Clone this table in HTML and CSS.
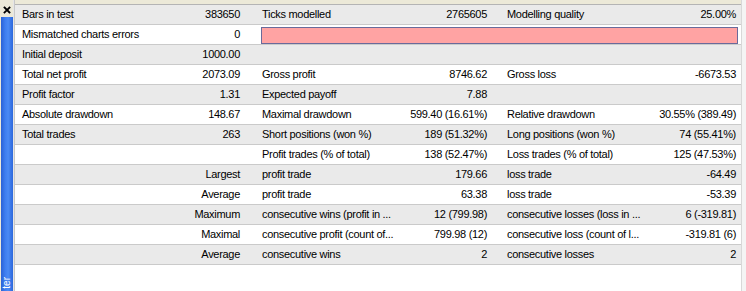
FILE: index.html
```html
<!DOCTYPE html>
<html>
<head>
<meta charset="utf-8">
<link rel="stylesheet" href="styles.css">
</head>
<body>
<div class="window">
  <aside class="side">
    <div class="close">
      <svg width="12" height="17" viewBox="0 0 12 17" aria-label="close">
        <path d="M3.5 7.5 L8.5 12.5 M8.5 7.5 L3.5 12.5" stroke="#000" stroke-width="1.8" stroke-linecap="square" fill="none"/>
      </svg>
    </div>
    <div class="tab"><span class="tab-text">ter</span></div>
  </aside>
  <div class="sep"></div>
  <main class="main">
    <div class="topband"></div>
    <div class="report">
      <div class="row alt">
        <div class="l1">Bars in test</div><div class="v1">383650</div>
        <div class="l2">Ticks modelled</div><div class="v2">2765605</div>
        <div class="l3">Modelling quality</div><div class="v3">25.00%</div>
      </div>
      <div class="row">
        <div class="l1">Mismatched charts errors</div><div class="v1">0</div>
        <div class="quality"><div class="qbar"></div></div>
      </div>
      <div class="row alt">
        <div class="l1">Initial deposit</div><div class="v1">1000.00</div>
        <div class="l2"></div><div class="v2"></div><div class="l3"></div><div class="v3"></div>
      </div>
      <div class="row">
        <div class="l1">Total net profit</div><div class="v1">2073.09</div>
        <div class="l2">Gross profit</div><div class="v2">8746.62</div>
        <div class="l3">Gross loss</div><div class="v3">-6673.53</div>
      </div>
      <div class="row alt">
        <div class="l1">Profit factor</div><div class="v1">1.31</div>
        <div class="l2">Expected payoff</div><div class="v2">7.88</div>
        <div class="l3"></div><div class="v3"></div>
      </div>
      <div class="row">
        <div class="l1">Absolute drawdown</div><div class="v1">148.67</div>
        <div class="l2">Maximal drawdown</div><div class="v2">599.40 (16.61%)</div>
        <div class="l3">Relative drawdown</div><div class="v3">30.55% (389.49)</div>
      </div>
      <div class="row alt">
        <div class="l1">Total trades</div><div class="v1">263</div>
        <div class="l2">Short positions (won %)</div><div class="v2">189 (51.32%)</div>
        <div class="l3">Long positions (won %)</div><div class="v3">74 (55.41%)</div>
      </div>
      <div class="row">
        <div class="l1"></div><div class="v1"></div>
        <div class="l2">Profit trades (% of total)</div><div class="v2">138 (52.47%)</div>
        <div class="l3">Loss trades (% of total)</div><div class="v3">125 (47.53%)</div>
      </div>
      <div class="row alt">
        <div class="l1"></div><div class="v1">Largest</div>
        <div class="l2">profit trade</div><div class="v2">179.66</div>
        <div class="l3">loss trade</div><div class="v3">-64.49</div>
      </div>
      <div class="row">
        <div class="l1"></div><div class="v1">Average</div>
        <div class="l2">profit trade</div><div class="v2">63.38</div>
        <div class="l3">loss trade</div><div class="v3">-53.39</div>
      </div>
      <div class="row alt">
        <div class="l1"></div><div class="v1">Maximum</div>
        <div class="l2">consecutive wins (profit in ...</div><div class="v2">12 (799.98)</div>
        <div class="l3">consecutive losses (loss in ...</div><div class="v3">6 (-319.81)</div>
      </div>
      <div class="row">
        <div class="l1"></div><div class="v1">Maximal</div>
        <div class="l2">consecutive profit (count of...</div><div class="v2">799.98 (12)</div>
        <div class="l3">consecutive loss (count of l...</div><div class="v3">-319.81 (6)</div>
      </div>
      <div class="row alt">
        <div class="l1"></div><div class="v1">Average</div>
        <div class="l2">consecutive wins</div><div class="v2">2</div>
        <div class="l3">consecutive losses</div><div class="v3">2</div>
      </div>
    </div>
  </main>
  <div class="rightstrip"></div>
</div>
</body>
</html>
```
FILE: styles.css
```css
* { box-sizing: border-box; }
html, body {
  margin: 0;
  padding: 0;
  background: #ffffff;
}
body {
  font-family: "Liberation Sans", Arial, sans-serif;
  font-size: 11px;
  color: #000000;
}
.window {
  display: flex;
  width: 746px;
  height: 291px;
  overflow: hidden;
  background: #ffffff;
}
.side {
  width: 13px;
  display: flex;
  flex-direction: column;
  background: #ece9d8;
  padding-left: 1px;
}
.close {
  height: 17px;
  width: 12px;
}
.close svg {
  display: block;
}
.tab {
  flex: 1;
  width: 12px;
  background: linear-gradient(to right, #2a62d6 0%, #3e7ef0 35%, #4a8af4 60%, #2d68dc 100%);
  display: flex;
  flex-direction: column;
  justify-content: flex-end;
  align-items: center;
  padding-bottom: 2px;
}
.tab-text {
  writing-mode: vertical-rl;
  transform: rotate(180deg);
  color: #ffffff;
  font-size: 10px;
  line-height: 12px;
  white-space: nowrap;
}
.sep {
  width: 2px;
  background: #c8c8c8;
  border-left: 1px solid #e6e6e6;
}
.main {
  width: 726px;
  display: flex;
  flex-direction: column;
}
.topband {
  height: 5px;
  background: #ece9d8;
  border-bottom: 1px solid #b4b4b4;
}
.report {
  display: flex;
  flex-direction: column;
}
.row {
  display: grid;
  grid-template-columns: 150px 80px 160px 86px 160px 90px;
  height: 20px;
  border-bottom: 1px solid #cacaca;
  background: #ffffff;
  line-height: 19px;
  white-space: nowrap;
  letter-spacing: -0.3px;
}
.row.alt {
  background: #eaeaea;
}
.row > div {
  overflow: hidden;
}
.l1 { padding-left: 7px; }
.l2 { padding-left: 17px; }
.l3 { padding-left: 16px; }
.v1, .v2, .v3 {
  text-align: right;
  padding-right: 5px;
}
.v2 { padding-right: 4px; }
.quality {
  grid-column: 3 / 7;
  padding: 2px 3px 1px 16px;
}
.qbar {
  height: 17px;
  background: #ffa3a3;
  border: 1px solid #6a6a9a;
}
.rightstrip {
  flex: 1;
  background: #f4f4f4;
  border-left: 1px solid #d8d8d8;
}
```
